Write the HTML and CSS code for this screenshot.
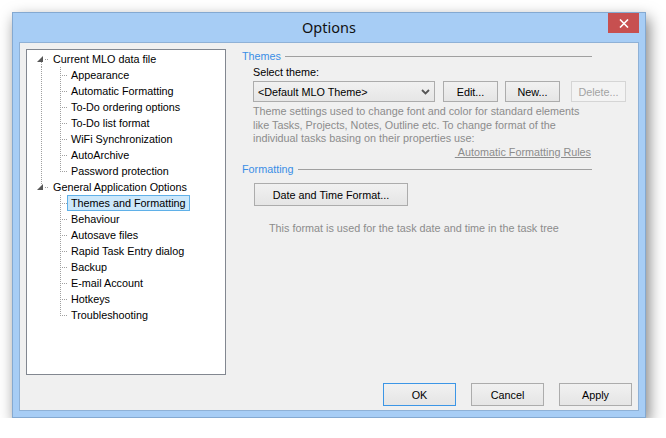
FILE: index.html
```html
<!DOCTYPE html>
<html>
<head>
<meta charset="utf-8">
<link rel="stylesheet" href="styles.css">
</head>
<body>
<div class="page">
  <div class="window">
    <div class="titlebar">
      <span></span>
      <span class="title">Options</span>
      <button class="close" aria-label="Close">
        <svg width="10" height="9" viewBox="0 0 10 9"><path d="M1 0.5 L9 8.5 M9 0.5 L1 8.5" stroke="#fff" stroke-width="1.6" fill="none"/></svg>
      </button>
    </div>
    <div class="client">
      <div class="main">
        <div class="tree">
          <div class="row"><span class="col root root-first"><svg class="glyph" width="7" height="6" viewBox="0 0 7 6"><polygon points="6,0 6,6 0,6" fill="#575757"/></svg></span><span class="label root-label">Current MLO data file</span></div>
          <div class="row"><span class="col vert"></span><span class="col2 tee"></span><span class="label">Appearance</span></div>
          <div class="row"><span class="col vert"></span><span class="col2 tee"></span><span class="label">Automatic Formatting</span></div>
          <div class="row"><span class="col vert"></span><span class="col2 tee"></span><span class="label">To-Do ordering options</span></div>
          <div class="row"><span class="col vert"></span><span class="col2 tee"></span><span class="label">To-Do list format</span></div>
          <div class="row"><span class="col vert"></span><span class="col2 tee"></span><span class="label">WiFi Synchronization</span></div>
          <div class="row"><span class="col vert"></span><span class="col2 tee"></span><span class="label">AutoArchive</span></div>
          <div class="row"><span class="col vert"></span><span class="col2 ell"></span><span class="label">Password protection</span></div>
          <div class="row"><span class="col root root-last"><svg class="glyph" width="7" height="6" viewBox="0 0 7 6"><polygon points="6,0 6,6 0,6" fill="#575757"/></svg></span><span class="label root-label">General Application Options</span></div>
          <div class="row"><span class="col"></span><span class="col2 tee"></span><span class="label selected">Themes and Formatting</span></div>
          <div class="row"><span class="col"></span><span class="col2 tee"></span><span class="label">Behaviour</span></div>
          <div class="row"><span class="col"></span><span class="col2 tee"></span><span class="label">Autosave files</span></div>
          <div class="row"><span class="col"></span><span class="col2 tee"></span><span class="label">Rapid Task Entry dialog</span></div>
          <div class="row"><span class="col"></span><span class="col2 tee"></span><span class="label">Backup</span></div>
          <div class="row"><span class="col"></span><span class="col2 tee"></span><span class="label">E-mail Account</span></div>
          <div class="row"><span class="col"></span><span class="col2 tee"></span><span class="label">Hotkeys</span></div>
          <div class="row"><span class="col"></span><span class="col2 ell"></span><span class="label">Troubleshooting</span></div>
        </div>
        <div class="panel">
          <div class="group-head themes-head"><span>Themes</span></div>
          <div class="sub select-label">Select theme:</div>
          <div class="sub combo-row">
            <div class="combo"><span>&lt;Default MLO Theme&gt;</span>
              <svg width="9" height="6" viewBox="0 0 9 6"><polyline points="1,1 4.5,4.5 8,1" stroke="#555" stroke-width="1.8" fill="none"/></svg>
            </div>
            <button class="btn btn-edit">Edit...</button>
            <button class="btn btn-new">New...</button>
            <button class="btn btn-delete" disabled>Delete...</button>
          </div>
          <div class="sub desc">
            Theme settings used to change font and color for standard elements<br>
            like Tasks, Projects, Notes, Outline etc. To change format of the<br>
            individual tasks basing on their properties use:
            <div class="link-line"><span class="link">&nbsp;Automatic Formatting Rules</span></div>
          </div>
          <div class="group-head formatting-head"><span>Formatting</span></div>
          <div class="sub"><button class="btn btn-date">Date and Time Format...</button></div>
          <div class="note">This format is used for the task date and time in the task tree</div>
        </div>
      </div>
      <div class="actions">
        <button class="btn btn-main btn-default">OK</button>
        <button class="btn btn-main">Cancel</button>
        <button class="btn btn-main">Apply</button>
      </div>
    </div>
  </div>
</div>
</body>
</html>
```
FILE: styles.css
```css
* { box-sizing: border-box; }

body {
  margin: 0;
  background: #ffffff;
  font-family: "Liberation Sans", Arial, sans-serif;
  font-size: 10.8px;
  color: #000;
}

.page {
  padding: 12px 0 0 12px;
}

.window {
  width: 634px;
  height: 406px;
  border: 1px solid #84a9d1;
  background: #a7cdf5;
  padding: 0 6px 6px 6px;
  display: flex;
  flex-direction: column;
  box-shadow: 3px 6px 14px rgba(0, 0, 0, 0.5);
}

.titlebar {
  height: 29px;
  flex: none;
  display: grid;
  grid-template-columns: 1fr auto 1fr;
}

.title {
  font-family: "Noto Sans", "Open Sans", sans-serif;
  font-size: 14.5px;
  line-height: 29px;
  color: #111;
}

.close {
  justify-self: end;
  align-self: start;
  width: 31px;
  height: 20px;
  border: 0;
  padding: 0;
  background: #c75050;
  display: flex;
  align-items: center;
  justify-content: center;
}

.client {
  flex: 1;
  border: 1px solid #8fb1d6;
  background: #f0f0f0;
  padding: 6px 6px 4px 6px;
  display: flex;
  flex-direction: column;
  gap: 8px;
}

.main {
  display: flex;
  height: 326px;
  flex: none;
}

/* ---------- tree ---------- */
.tree {
  width: 200px;
  flex: none;
  border: 1px solid #828790;
  background: #fff;
  padding-top: 1px;
}

.row {
  display: flex;
  height: 16px;
}

.col {
  width: 19px;
  height: 16px;
  flex: none;
}

.col.root {
  width: 22px;
  display: flex;
  align-items: flex-start;
}

.glyph {
  margin: 5px 0 0 10px;
  flex: none;
}

.col2 {
  width: 21px;
  height: 16px;
  flex: none;
}

.vert {
  background: repeating-linear-gradient(to bottom, #a0a0a0 0 1px, transparent 1px 2px) 14px 0 / 1px 100% no-repeat;
}

.root-first {
  background:
    repeating-linear-gradient(to bottom, #a0a0a0 0 1px, transparent 1px 2px) 14px 11px / 1px 5px no-repeat,
    repeating-linear-gradient(to right, #a0a0a0 0 1px, transparent 1px 2px) 18px 8px / 4px 1px no-repeat;
}

.root-last {
  background:
    repeating-linear-gradient(to bottom, #a0a0a0 0 1px, transparent 1px 2px) 14px 0 / 1px 5px no-repeat,
    repeating-linear-gradient(to right, #a0a0a0 0 1px, transparent 1px 2px) 18px 8px / 4px 1px no-repeat;
}

.tee {
  background:
    repeating-linear-gradient(to bottom, #a0a0a0 0 1px, transparent 1px 2px) 14px 0 / 1px 100% no-repeat,
    repeating-linear-gradient(to right, #a0a0a0 0 1px, transparent 1px 2px) 16px 8px / 5px 1px no-repeat;
}

.ell {
  background:
    repeating-linear-gradient(to bottom, #a0a0a0 0 1px, transparent 1px 2px) 14px 0 / 1px 9px no-repeat,
    repeating-linear-gradient(to right, #a0a0a0 0 1px, transparent 1px 2px) 16px 8px / 5px 1px no-repeat;
}

.label {
  height: 16px;
  line-height: 14px;
  border: 1px solid transparent;
  padding: 0 3px 0 3px;
  white-space: nowrap;
}

.label.selected {
  background: #cce8fb;
  border-color: #5fb0e8;
}

/* ---------- right panel ---------- */
.panel {
  margin-left: 16px;
  flex: 1;
}

.group-head {
  display: flex;
  align-items: center;
  width: 350px;
  height: 14px;
  line-height: 14px;
  color: #3a8ee6;
}

.group-head::after {
  content: "";
  flex: 1;
  height: 1px;
  background: #a0a0a0;
  margin-left: 4px;
}

.formatting-head {
  margin-top: 3px;
}

.sub {
  padding-left: 11px;
}

.select-label {
  margin-top: 2px;
  height: 14px;
  line-height: 14px;
}

.combo-row {
  display: flex;
  margin-top: 2px;
}

.combo {
  width: 182px;
  height: 21px;
  border: 1px solid #acacac;
  background: linear-gradient(#f1f1f1, #e6e6e6);
  display: flex;
  align-items: center;
  justify-content: space-between;
  padding: 0 4px 0 4px;
}

.combo svg {
  margin-top: 1px;
}

.btn {
  font-family: inherit;
  font-size: 10.8px;
  color: #000;
  border: 1px solid #acacac;
  background: linear-gradient(#f1f1f1, #e5e5e5);
  padding: 0;
  height: 21px;
  width: 55px;
}

.btn-edit { margin-left: 8px; }
.btn-new { margin-left: 7px; }
.btn-delete {
  margin-left: 11px;
  color: #a3a3a3;
  border-color: #d5d5d5;
  background: #f3f3f3;
}

.desc {
  margin-top: 3px;
  width: 350px;
  line-height: 13.5px;
  color: #8c8c8c;
  white-space: nowrap;
}

.link-line {
  text-align: right;
  padding-right: 1px;
}

.link {
  text-decoration: underline;
}

.btn-date {
  margin-top: 7px;
  margin-left: 1px;
  width: 154px;
  height: 23px;
}

.note {
  margin-top: 15px;
  padding-left: 27px;
  height: 14px;
  line-height: 14px;
  color: #8c8c8c;
}

/* ---------- bottom buttons ---------- */
.actions {
  display: flex;
  justify-content: flex-end;
  gap: 15px;
  height: 23px;
  flex: none;
}

.btn-main {
  width: 73px;
  height: 23px;
}

.btn-default {
  border-color: #3c96e6;
}
```
